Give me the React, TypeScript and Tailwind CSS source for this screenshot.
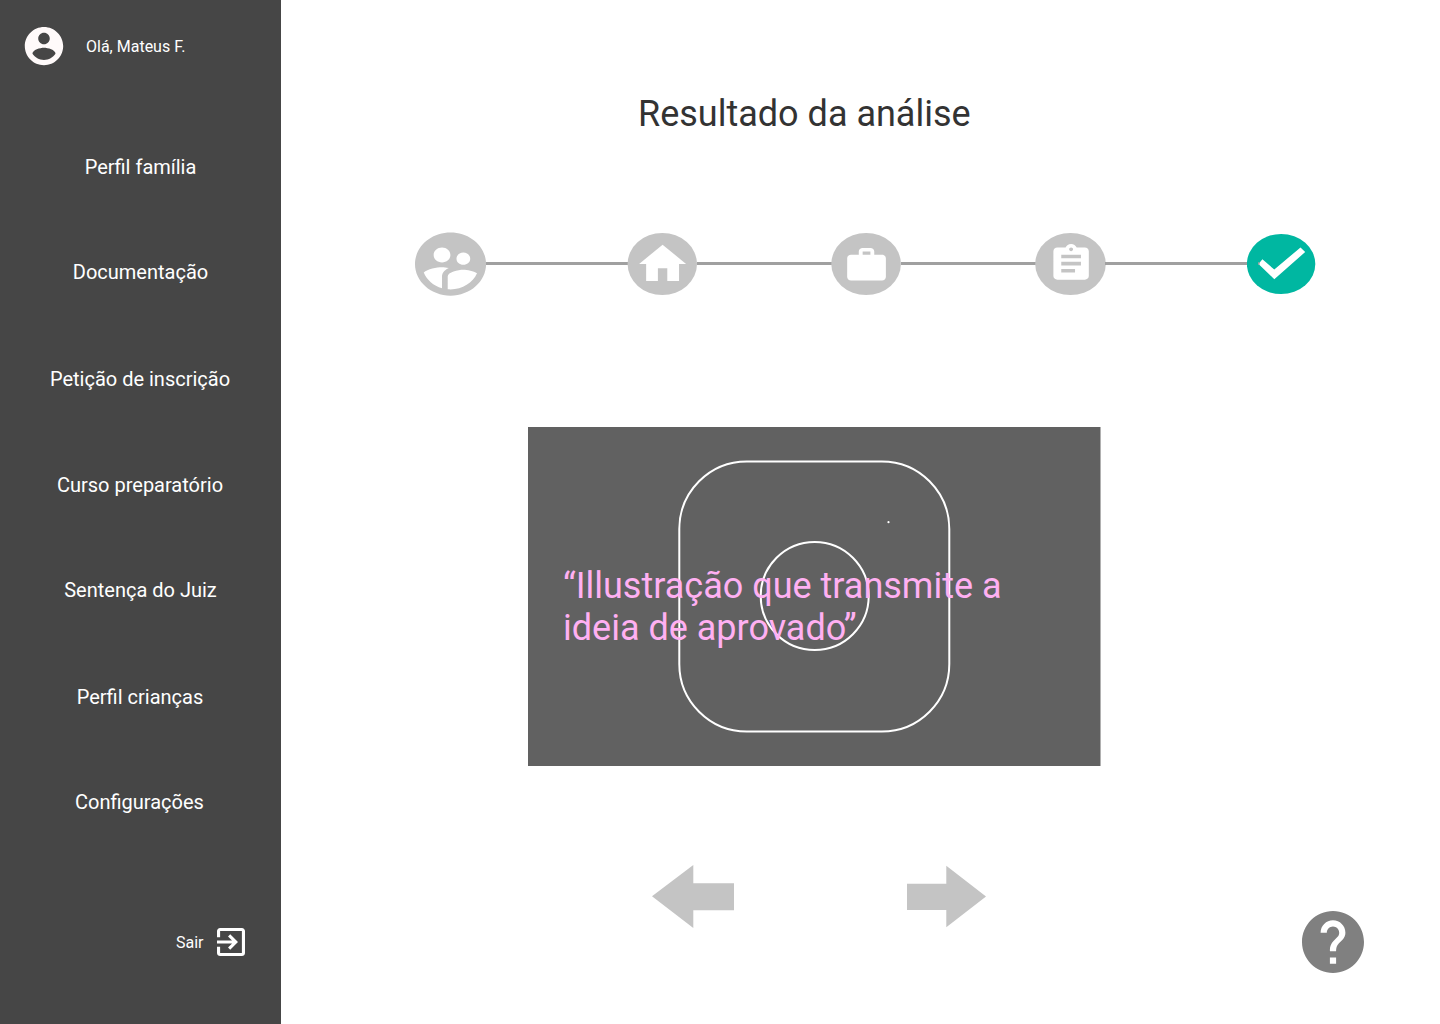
import React from "react";

const NAV = [
  { label: "Perfil família", style: "mt-[86px]" },
  { label: "Documentação", style: "mt-[75px]" },
  { label: "Petição de inscrição", style: "mt-[77px] mr-px" },
  { label: "Curso preparatório", style: "mt-[76px] mr-px" },
  { label: "Sentença do Juiz", style: "mt-[75px]" },
  { label: "Perfil crianças", style: "mt-[77px] mr-px" },
  { label: "Configurações", style: "mt-[75px] mr-0.5" },
];

function Sidebar() {
  return (
    <aside className="flex w-[281px] shrink-0 flex-col bg-[#464646] text-white">
      <div className="mt-[26px] flex h-10 items-center pl-6">
        <svg className="h-10 w-10" viewBox="0 0 40 40" fill="#fffafa">
          <g transform="translate(-3.05 -2.95) scale(1.92)">
            <path d="M12 2C6.48 2 2 6.48 2 12s4.48 10 10 10 10-4.48 10-10S17.52 2 12 2zm0 3c1.66 0 3 1.34 3 3s-1.34 3-3 3-3-1.34-3-3 1.34-3 3-3zm0 14.2c-2.5 0-4.71-1.28-6-3.22.03-1.99 4-3.08 6-3.08 1.99 0 5.97 1.09 6 3.08-1.29 1.94-3.5 3.22-6 3.22z" />
          </g>
        </svg>
        <span className="mt-0.5 ml-[22px] text-base">Olá, Mateus F.</span>
      </div>
      <nav className="flex flex-col items-center">
        {NAV.map((item) => (
          <a key={item.label} className={`${item.style} h-[30px] text-xl leading-[30px]`}>
            {item.label}
          </a>
        ))}
      </nav>
      <div className="mt-[111px] flex h-7 items-center pl-44">
        <span className="mt-0.5 w-[41px] text-base">Sair</span>
        <svg className="h-7 w-7" viewBox="3 3 18 18" fill="white">
          <path d="M10.09 15.59L11.5 17l5-5-5-5-1.41 1.41L12.67 11H3v2h9.67l-2.58 2.59zM19 3H5c-1.11 0-2 .9-2 2v4h2V5h14v14H5v-4H3v4c0 1.1.89 2 2 2h14c1.1 0 2-.9 2-2V5c0-1.1-.9-2-2-2z" />
        </svg>
      </div>
    </aside>
  );
}

function Stepper() {
  return (
    <div className="mt-[96px] ml-[133px] flex h-[66px] items-center">
      <svg className="h-[66px] w-[73px] shrink-0" viewBox="414 231 73 66" fill="#c4c4c4">
        <g transform="translate(407.9 226.2) scale(3.555 3.16)">
          <path d="M11.99 2c-5.52 0-10 4.48-10 10s4.48 10 10 10 10-4.48 10-10-4.48-10-10-10zm3.61 6.34c1.07 0 1.93.86 1.93 1.93 0 1.07-.86 1.93-1.93 1.93-1.07 0-1.93-.86-1.93-1.93-.01-1.07.86-1.93 1.93-1.93zm-6-1.58c1.3 0 2.36 1.06 2.36 2.36 0 1.3-1.06 2.36-2.36 2.36s-2.36-1.06-2.36-2.36c0-1.31 1.05-2.36 2.36-2.36zm0 9.13v3.75c-2.4-.75-4.3-2.6-5.14-4.96 1.05-1.12 3.67-1.69 5.14-1.69.53 0 1.2.08 1.9.22-1.64.87-1.9 2.02-1.9 2.68zM11.99 20c-.27 0-.53-.01-.79-.04v-4.07c0-1.42 2.94-2.13 4.4-2.13 1.07 0 2.92.39 3.84 1.15-1.17 2.97-4.06 5.09-7.45 5.09z" />
        </g>
      </svg>
      <Connector width="w-[142px]" />
      <svg className="h-[66px] w-[71px] shrink-0" viewBox="627 231 71 66">
        <ellipse cx="662.3" cy="264" rx="34.7" ry="31" fill="#c4c4c4" />
        <g transform="translate(634.4 238.3) scale(2.35 2.135)" fill="white">
          <path d="M10 20v-6h4v6h5v-8h3L12 3 2 12h3v8z" />
        </g>
      </svg>
      <Connector width="w-[135px]" />
      <svg className="h-[66px] w-[71px] shrink-0" viewBox="831 231 71 66">
        <ellipse cx="866.1" cy="264" rx="34.8" ry="31" fill="#c4c4c4" />
        <g transform="translate(843.3 244.6) scale(1.935 1.71)" fill="white">
          <path d="M20 6h-4V4c0-1.11-.89-2-2-2h-4c-1.11 0-2 .89-2 2v2H4c-1.11 0-1.99.89-1.99 2L2 19c0 1.11.89 2 2 2h16c1.11 0 2-.89 2-2V8c0-1.11-.89-2-2-2zm-6 0h-4V4h4v2z" />
        </g>
      </svg>
      <Connector width="w-[135px]" />
      <svg className="h-[66px] w-[71px] shrink-0" viewBox="1035 231 71 66">
        <ellipse cx="1070.5" cy="264" rx="35.3" ry="31" fill="#c4c4c4" />
        <g transform="translate(1047.5 242.2) scale(1.967 1.785)" fill="white">
          <path d="M19 3h-4.18C14.4 1.84 13.3 1 12 1c-1.3 0-2.4.84-2.82 2H5c-1.1 0-2 .9-2 2v14c0 1.1.9 2 2 2h14c1.1 0 2-.9 2-2V5c0-1.1-.9-2-2-2zm-7 0c.55 0 1 .45 1 1s-.45 1-1 1-1-.45-1-1 .45-1 1-1zm2 14H7v-2h7v2zm3-4H7v-2h10v2zm0-4H7V7h10v2z" />
        </g>
      </svg>
      <Connector width="w-[143px]" />
      <svg className="h-[66px] w-[69px] shrink-0" viewBox="1247 231 69 66">
        <ellipse cx="1281.1" cy="264" rx="34.2" ry="30" fill="#00b7a1" />
        <path d="M1300.5 247.4L1305.2 252L1274.3 279.2L1258.5 264L1262.4 259.3L1274.3 269.6z" fill="white" />
        <path d="M1258 262.3h1.6v2.4h-1.6z" fill="#a0a0a0" />
      </svg>
    </div>
  );
}

// The line tucks one pixel under the circle on each side.
function Connector({ width }: { width: string }) {
  return <div className={`${width} -mx-px mb-[2px] h-[3px] shrink-0 bg-[#a0a0a0]`} />;
}

function Illustration() {
  return (
    <div className="relative mt-[130px] ml-[247px] h-[339px] w-[573px] border-r border-[#b0b0b0] bg-[#616161]">
      <svg className="absolute inset-0 h-[339px] w-[572px]" viewBox="528 427 572 339" fill="none" stroke="white" strokeWidth="2">
        <rect x="679.3" y="461.5" width="270" height="270" rx="67.5" />
        <circle cx="814.7" cy="596" r="54" />
        <circle cx="888.5" cy="522.2" r="1.1" fill="white" stroke="none" />
      </svg>
      <p className="relative pt-[138px] pl-[35px] text-4xl leading-[42px] text-[#ffb0f2]">
        “Illustração que transmite a<br />ideia de aprovado”
      </p>
    </div>
  );
}

export default function App() {
  return (
    <div className="flex h-[1024px] w-[1440px] overflow-hidden bg-white font-['Roboto',sans-serif]">
      <Sidebar />
      <main className="flex flex-1 flex-col">
        <h1 className="mt-[93px] ml-[357px] h-[42px] text-4xl leading-[42px] text-[#333333]">Resultado da análise</h1>
        <Stepper />
        <Illustration />
        <div className="mt-[98px] ml-[371px] flex h-[110px] items-start">
          <svg className="h-16 w-[82px]" viewBox="652 864 82 64" fill="#c4c4c4">
            <path d="M652 896.3L693.3 865v18.2H734v27H693.3V928z" />
          </svg>
          <svg className="ml-[173px] h-16 w-[79px]" viewBox="907 864 79 64" fill="#c4c4c4">
            <path d="M986 896.5L946.3 865.8v18H907V910H946.3V927.2z" />
          </svg>
          <svg className="mt-[47px] ml-[316px] h-[62px] w-[62px]" viewBox="2 2 20 20" fill="#808080">
            <path d="M12 2C6.48 2 2 6.48 2 12s4.48 10 10 10 10-4.48 10-10S17.52 2 12 2zm1 17h-2v-2h2v2zm2.07-7.75l-.9.92C13.45 12.9 13 13.5 13 15h-2v-.5c0-1.1.45-2.1 1.17-2.83l1.24-1.26c.37-.36.59-.86.59-1.41 0-1.1-.9-2-2-2s-2 .9-2 2H8c0-2.21 1.79-4 4-4s4 1.79 4 4c0 .88-.36 1.68-.93 2.25z" />
          </svg>
        </div>
      </main>
    </div>
  );
}
